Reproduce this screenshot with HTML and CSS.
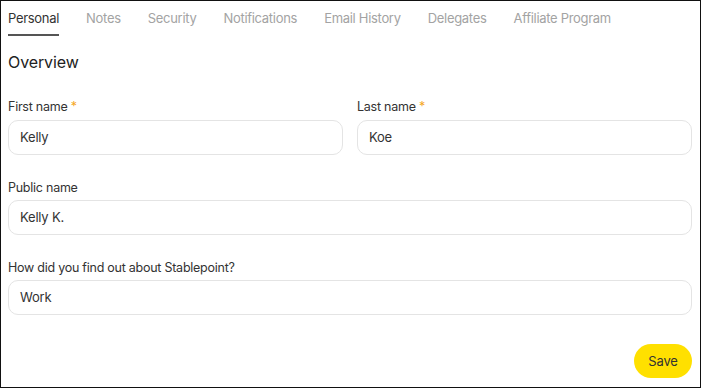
FILE: index.html
```html
<!DOCTYPE html>
<html lang="en">
<head>
<meta charset="utf-8">
<title>Personal</title>
<link rel="stylesheet" href="styles.css">
</head>
<body>
<div class="frame">
  <nav class="tabs">
    <span class="tab active">Personal</span>
    <span class="tab">Notes</span>
    <span class="tab">Security</span>
    <span class="tab">Notifications</span>
    <span class="tab">Email History</span>
    <span class="tab">Delegates</span>
    <span class="tab">Affiliate Program</span>
  </nav>
  <h2 class="title">Overview</h2>
  <div class="row">
    <div class="field">
      <label class="label">First name <span class="req">*</span></label>
      <div class="input">Kelly</div>
    </div>
    <div class="field">
      <label class="label">Last name <span class="req">*</span></label>
      <div class="input">Koe</div>
    </div>
  </div>
  <div class="field">
    <label class="label">Public name</label>
    <div class="input">Kelly K.</div>
  </div>
  <div class="field">
    <label class="label">How did you find out about Stablepoint?</label>
    <div class="input">Work</div>
  </div>
  <div class="actions">
    <button class="save">Save</button>
  </div>
</div>
</body>
</html>
```
FILE: styles.css
```css
* { box-sizing: border-box; }
html, body { margin: 0; padding: 0; background: #fff; }
body { font-family: Inter, "Noto Sans", sans-serif; color: #333; }
.frame {
  width: 701px;
  height: 388px;
  border: 1px solid #111;
  padding: 0 8px 0 7px;
  display: flex;
  flex-direction: column;
}
.tabs {
  display: flex;
  gap: 27px;
  height: 35px;
}
.tab {
  font-size: 13px;
  letter-spacing: -0.3px;
  line-height: 18px;
  padding-top: 8px;
  color: #a3a3a3;
  height: 35px;
}
.tab.active {
  color: #333;
  border-bottom: 2px solid #555;
}
.title {
  margin: 15px 0 0;
  font-size: 16px;
  letter-spacing: -0.1px;
  line-height: 22px;
  font-weight: 400;
  color: #222;
}
.row {
  display: flex;
  gap: 14px;
}
.row .field { flex: 1; }
.field {
  display: flex;
  flex-direction: column;
  margin-top: 25px;
}
.row .field { margin-top: 26px; }
.label {
  font-size: 12.5px;
  letter-spacing: -0.25px;
  line-height: 16px;
  color: #333;
  margin-bottom: 4px;
}
.row .label { margin-bottom: 5px; }
.req { color: #f5a623; }
.input {
  height: 35px;
  border: 1px solid #e4e4e4;
  border-radius: 10px;
  padding: 0 11px;
  font-size: 13px;
  letter-spacing: -0.2px;
  line-height: 33px;
  color: #333;
}
.actions {
  display: flex;
  justify-content: flex-end;
  margin-top: 29px;
}
.save {
  width: 58px;
  height: 34px;
  border: none;
  border-radius: 17px;
  background: #ffe000;
  font-family: Inter, "Noto Sans", sans-serif;
  font-size: 13px;
  letter-spacing: -0.2px;
  color: #333;
  padding: 0;
}
```
